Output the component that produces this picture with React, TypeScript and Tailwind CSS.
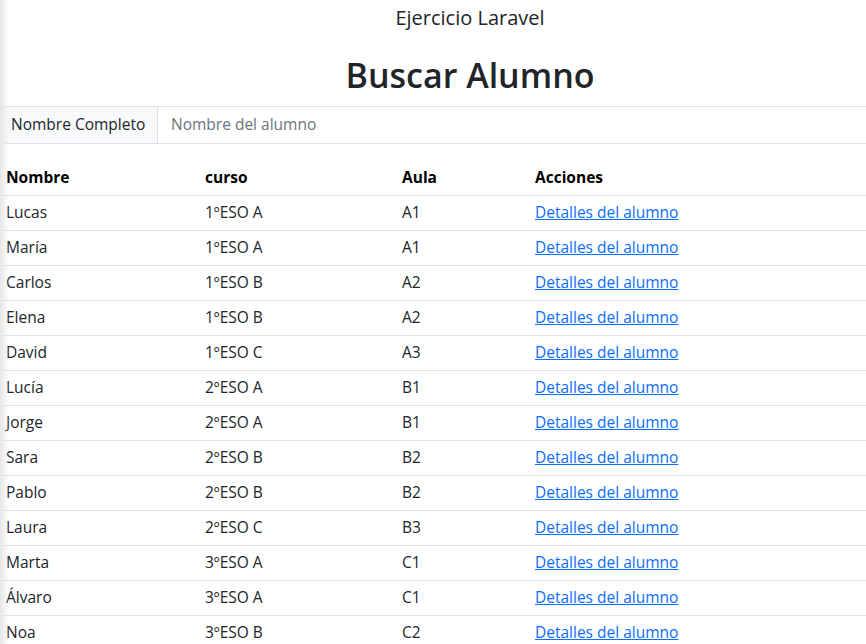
const alumnos = [
  { nombre: 'Lucas', curso: '1ºESO A', aula: 'A1' },
  { nombre: 'María', curso: '1ºESO A', aula: 'A1' },
  { nombre: 'Carlos', curso: '1ºESO B', aula: 'A2' },
  { nombre: 'Elena', curso: '1ºESO B', aula: 'A2' },
  { nombre: 'David', curso: '1ºESO C', aula: 'A3' },
  { nombre: 'Lucía', curso: '2ºESO A', aula: 'B1' },
  { nombre: 'Jorge', curso: '2ºESO A', aula: 'B1' },
  { nombre: 'Sara', curso: '2ºESO B', aula: 'B2' },
  { nombre: 'Pablo', curso: '2ºESO B', aula: 'B2' },
  { nombre: 'Laura', curso: '2ºESO C', aula: 'B3' },
  { nombre: 'Marta', curso: '3ºESO A', aula: 'C1' },
  { nombre: 'Álvaro', curso: '3ºESO A', aula: 'C1' },
  { nombre: 'Noa', curso: '3ºESO B', aula: 'C2' },
];

export default function App() {
  return (
    <div
      className="relative w-[866px] h-[644px] overflow-hidden bg-white text-[#212529]"
      style={{ fontFamily: '"Open Sans", "Noto Sans", sans-serif' }}
    >
      <div className="w-[940px]">
        <p className="text-center text-[20px] leading-[24px] pt-[6px]">Ejercicio Laravel</p>
        <h1 className="text-center text-[34px] leading-[46px] font-semibold mt-[22px]">Buscar Alumno</h1>

        <div className="mt-[8px] flex h-[38px] border border-[#dee2e6] rounded-l-[6px]">
          <span className="flex items-center px-[10px] w-[157px] bg-[#f8f9fa] border-r border-[#dee2e6] text-[15.5px]">
            Nombre Completo
          </span>
          <input
            placeholder="Nombre del alumno"
            className="flex-1 px-[13px] text-[15.5px] outline-none placeholder:text-[#6c757d]"
          />
        </div>

        <table className="mt-[16px] w-full border-collapse text-[15.5px]">
          <thead>
            <tr className="h-[35px] border-b border-[#dee2e6] text-black">
              <th className="w-[199px] px-[6px] text-left font-bold">Nombre</th>
              <th className="w-[197px] px-[6px] text-left font-bold">curso</th>
              <th className="w-[133px] px-[6px] text-left font-bold">Aula</th>
              <th className="px-[6px] text-left font-bold">Acciones</th>
            </tr>
          </thead>
          <tbody>
            {alumnos.map((a) => (
              <tr key={a.nombre} className="h-[35px] border-b border-[#dee2e6]">
                <td className="px-[6px]">{a.nombre}</td>
                <td className="px-[6px]">{a.curso}</td>
                <td className="px-[6px]">{a.aula}</td>
                <td className="px-[6px]">
                  <a href="#" className="text-[#0d6efd] underline">
                    Detalles del alumno
                  </a>
                </td>
              </tr>
            ))}
          </tbody>
        </table>
      </div>
      <div className="absolute left-0 top-0 h-full w-[9px] bg-gradient-to-r from-[#e6e6e6] to-transparent pointer-events-none" />
    </div>
  );
}
